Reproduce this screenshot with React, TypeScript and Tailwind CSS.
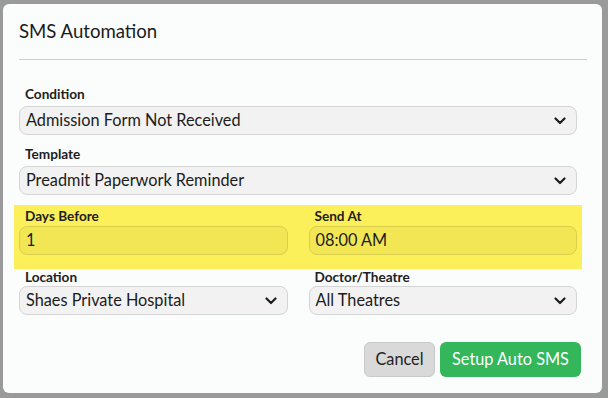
import React from "react";

const font = { fontFamily: "Lato, 'Noto Sans', sans-serif" };

function Chevron() {
  return (
    <svg width="12" height="8" viewBox="0 0 12 8" className="shrink-0">
      <polyline
        points="1.5,1.5 6,6 10.5,1.5"
        fill="none"
        stroke="#1f1f1f"
        strokeWidth="2.2"
        strokeLinecap="round"
        strokeLinejoin="round"
      />
    </svg>
  );
}

function Label({ children }: { children: React.ReactNode }) {
  return (
    <div className="text-[13.6px] leading-4 font-bold text-[#212121] pl-[6px]">
      {children}
    </div>
  );
}

function Select({ value }: { value: string }) {
  return (
    <div className="h-[29px] flex items-center justify-between rounded-lg border border-[#d5d5d5] bg-[#f2f2f2] pl-[6px] pr-[10px] text-[16.3px] text-[#1c1c1c]">
      <span>{value}</span>
      <Chevron />
    </div>
  );
}

function YellowInput({ value }: { value: string }) {
  return (
    <div className="h-[29px] flex items-center rounded-lg border border-[#d9cf4c] bg-[#f3e655] pl-[6px] text-[16.3px] text-[#1c1c1c]">
      {value}
    </div>
  );
}

export default function App() {
  return (
    <div
      className="w-[608px] h-[398px] bg-[#9a9a9a] pt-[4px] pl-[3px] pr-[6px] pb-[5px]"
      style={font}
    >
      <div className="h-full rounded-md bg-[#fbfcfc] flex flex-col">
        {/* Header */}
        <div className="ml-4 mr-[15px] pt-[15px] pb-4 border-b border-[#cfcfcf]">
          <h1 className="text-[18.6px] leading-6 text-[#1a1a1a]">SMS Automation</h1>
        </div>

        {/* Body */}
        <div className="pl-4 pr-[25px] pt-[26px]">
          <Label>Condition</Label>
          <div className="mt-1">
            <Select value="Admission Form Not Received" />
          </div>

          <div className="mt-[11px]">
            <Label>Template</Label>
            <div className="mt-1">
              <Select value="Preadmit Paperwork Reminder" />
            </div>
          </div>

          <div className="mt-[10px] -mx-[5px] px-[5px] pt-[3px] pb-[14px] bg-[#fbf05a] grid grid-cols-2 gap-x-[21px]">
            <div>
              <Label>Days Before</Label>
              <div className="mt-[2px]">
                <YellowInput value="1" />
              </div>
            </div>
            <div>
              <Label>Send At</Label>
              <div className="mt-[2px]">
                <YellowInput value="08:00 AM" />
              </div>
            </div>
          </div>

          <div className="grid grid-cols-2 gap-x-[21px]">
            <div>
              <Label>Location</Label>
              <div className="mt-[1px]">
                <Select value="Shaes Private Hospital" />
              </div>
            </div>
            <div>
              <Label>Doctor/Theatre</Label>
              <div className="mt-[1px]">
                <Select value="All Theatres" />
              </div>
            </div>
          </div>

          <div className="mt-[27px] flex justify-end gap-[5px] -mr-[4px]">
            <button className="h-[35px] w-[71px] rounded-md border border-[#c9c9c9] bg-[#d9d9d9] text-[16.3px] text-[#1f1f1f]">
              Cancel
            </button>
            <button className="h-[35px] w-[141px] rounded-md bg-[#34b65b] text-[16.3px] text-white">
              Setup Auto SMS
            </button>
          </div>
        </div>
      </div>
    </div>
  );
}
